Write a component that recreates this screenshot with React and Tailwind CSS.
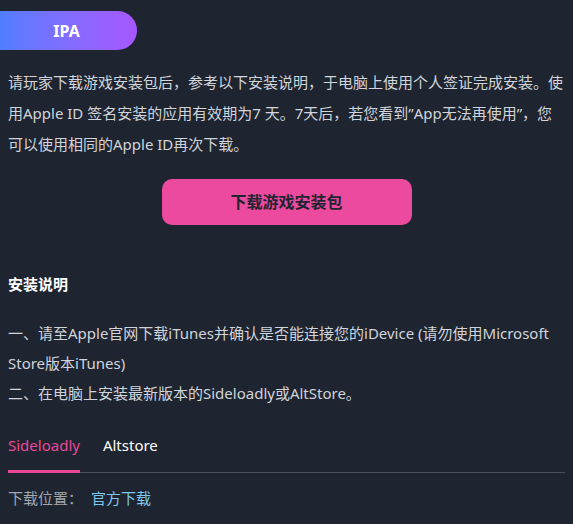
export default function App() {
  return (
    <div className="min-h-[524px] w-[573px] bg-[#1e2430] text-[15px] text-[#d1d5db]" style={{ fontFamily: '"Noto Sans", "Noto Sans CJK SC", sans-serif' }}>
      <div className="pt-[11px]">
        <div className="flex h-[39px] w-[137px] items-center justify-center rounded-r-full bg-gradient-to-r from-[#4f7dff] to-[#a656ff] pr-[4px] text-[16px] font-bold text-white">
          IPA
        </div>
      </div>
      <div className="px-2">
        <p className="mt-[17px] leading-[31px]">
          请玩家下载游戏安装包后，参考以下安装说明，于电脑上使用个人签证完成安装。使用Apple ID 签名安装的应用有效期为7 天。7天后，若您看到”App无法再使用”，您可以使用相同的Apple ID再次下载。
        </p>
        <div className="mt-[19px] flex justify-center">
          <button className="h-[46px] w-[250px] rounded-[10px] bg-[#ec4a9f] text-[16px] font-bold text-[#1e2430]">
            下载游戏安装包
          </button>
        </div>
        <h3 className="mt-[47px] font-bold leading-[24px] text-white">安装说明</h3>
        <div className="mt-[22px] leading-[30px]">
          <p>一、请至Apple官网下载iTunes并确认是否能连接您的iDevice (请勿使用Microsoft Store版本iTunes)</p>
          <p>二、在电脑上安装最新版本的Sideloadly或AltStore。</p>
        </div>
        <div className="mt-[26px] flex border-b border-[#4b5060]">
          <div className="relative pb-[15px] text-[#ec4899]">
            Sideloadly
            <div className="absolute bottom-[-1px] left-0 right-0 h-[3px] bg-[#ec4899]" />
          </div>
          <div className="ml-[23px] pb-[15px] text-white">Altstore</div>
        </div>
        <div className="mt-[14px] flex">
          <span className="text-[#a3a6ad]">下载位置：</span>
          <span className="ml-[8px] text-[#7cc8ef]">官方下载</span>
        </div>
      </div>
    </div>
  );
}
